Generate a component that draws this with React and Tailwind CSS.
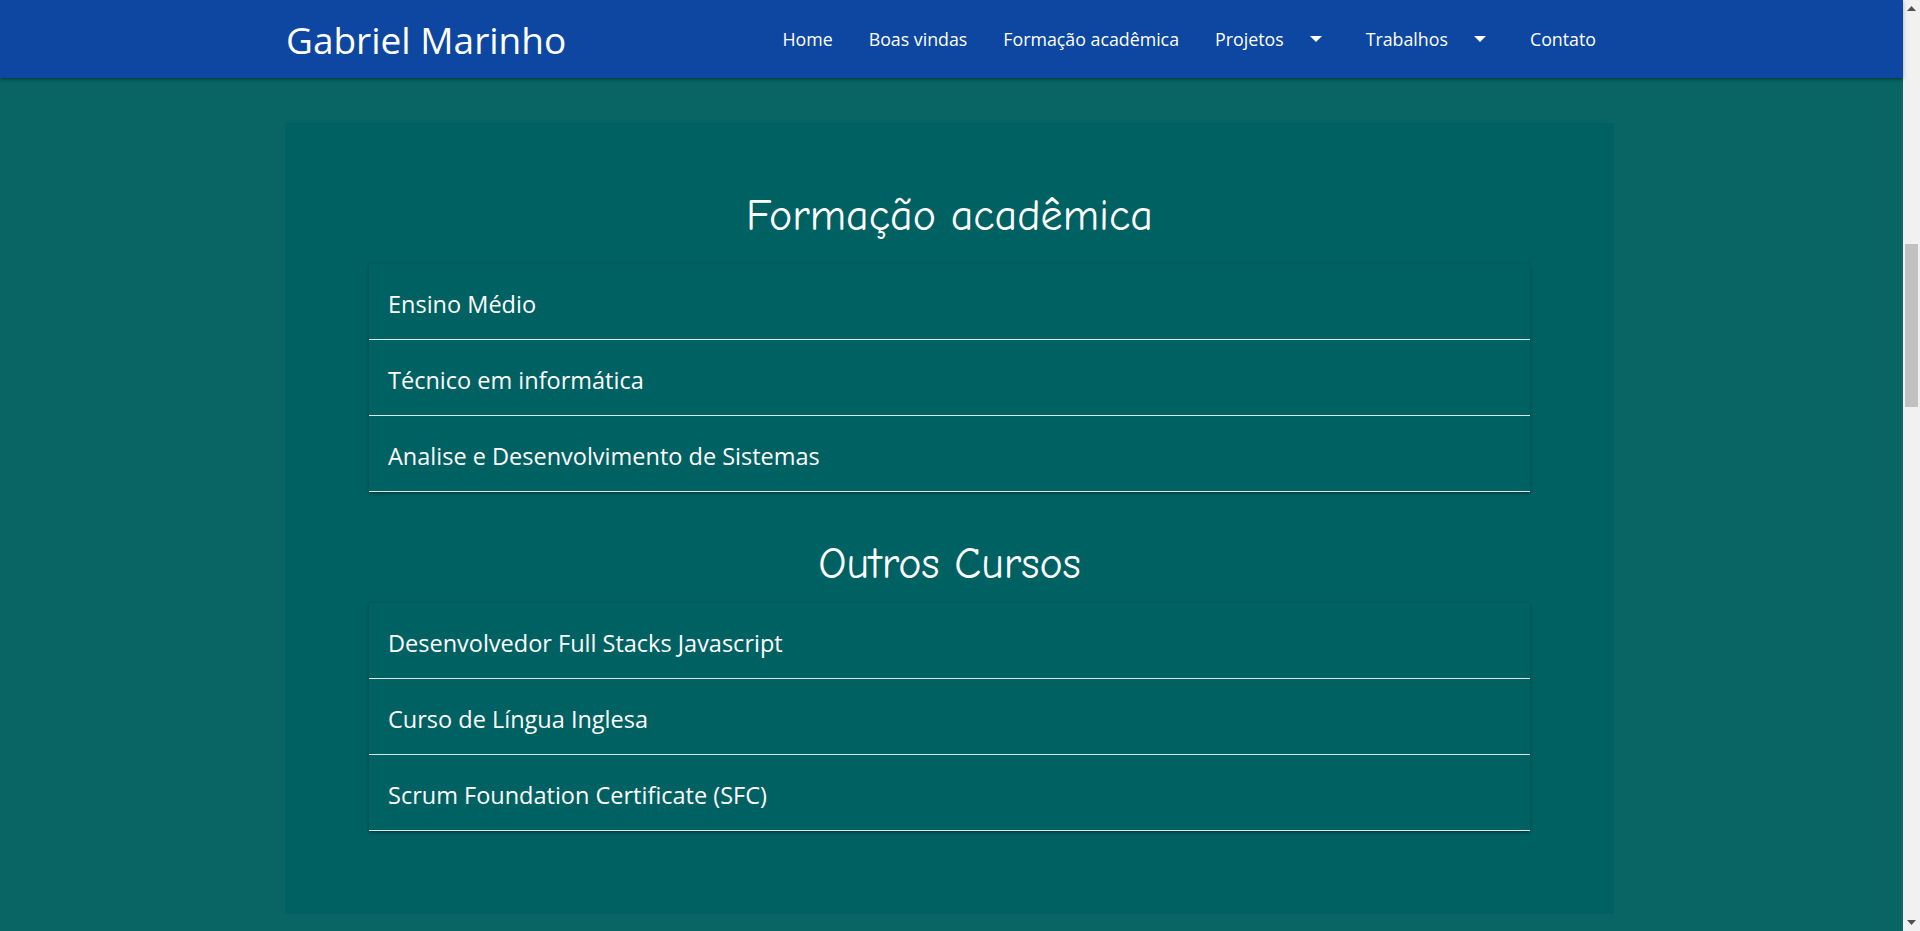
import React from 'react';

const navLinks = [
  { label: 'Home' },
  { label: 'Boas vindas' },
  { label: 'Formação acadêmica' },
  { label: 'Projetos', dropdown: true },
  { label: 'Trabalhos', dropdown: true },
  { label: 'Contato' },
];

const formacao = [
  'Ensino Médio',
  'Técnico em informática',
  'Analise e Desenvolvimento de Sistemas',
];

const cursos = [
  'Desenvolvedor Full Stacks Javascript',
  'Curso de Língua Inglesa',
  'Scrum Foundation Certificate (SFC)',
];

const DropArrow = () => (
  <svg width="12" height="6" viewBox="0 0 12 6" className="ml-[26px] mr-[44px]">
    <polygon points="0,0 12,0 6,6" fill="#ffffff" />
  </svg>
);

const Collection = ({ items }) => (
  <ul className="mx-[84px] shadow-[0_2px_2px_0_rgba(0,0,0,0.14),0_3px_1px_-2px_rgba(0,0,0,0.12),0_1px_5px_0_rgba(0,0,0,0.2)]">
    {items.map((item) => (
      <li
        key={item}
        className="h-[76px] flex items-center pl-[19px] pt-[6px] border-b border-[#dfe6e6] text-[23.5px] text-white"
      >
        {item}
      </li>
    ))}
  </ul>
);

const App = () => {
  return (
    <div className="h-screen flex overflow-hidden font-['Open_Sans',sans-serif]">
      <div className="flex-1 flex flex-col bg-[#086563]">
        {/* Navbar */}
        <nav className="relative z-10 h-[78px] shrink-0 bg-[#0d47a1] shadow-[0_2px_2px_0_rgba(0,0,0,0.14),0_3px_1px_-2px_rgba(0,0,0,0.12),0_1px_5px_0_rgba(0,0,0,0.2)]">
          <div className="ml-[285px] w-[1329px] h-full flex items-center justify-between">
            <a className="text-white text-[37px] leading-none pl-px">Gabriel Marinho</a>
            <ul className="flex items-center pr-[18px]">
              {navLinks.map((link, i) => (
                <li
                  key={link.label}
                  className={`flex items-center text-white text-[17.8px] ${
                    i === navLinks.length - 1 || link.dropdown ? '' : 'mr-[36px]'
                  }`}
                >
                  {link.label}
                  {link.dropdown && <DropArrow />}
                </li>
              ))}
            </ul>
          </div>
        </nav>

        {/* Conteúdo */}
        <div className="pt-[45px]">
          <section className="ml-[285px] w-[1329px] bg-[#006163] pt-[65px] pb-[83px]">
            <h3 className="h-[56px] leading-[56px] text-center text-white text-[44px] font-['Comic_Sans_MS','Comic_Neue','Open_Sans',sans-serif]">
              Formação acadêmica
            </h3>
            <div className="mt-[20px]">
              <Collection items={formacao} />
            </div>
            <h3 className="mt-[44px] h-[56px] leading-[56px] text-center text-white text-[44px] font-['Comic_Sans_MS','Comic_Neue','Open_Sans',sans-serif]">
              Outros Cursos
            </h3>
            <div className="mt-[11px]">
              <Collection items={cursos} />
            </div>
          </section>
        </div>
      </div>

      {/* Barra de rolagem */}
      <div className="w-[17px] shrink-0 bg-[#f1f1f1] flex flex-col">
        <div className="h-[17px] flex items-center justify-center">
          <svg width="9" height="5" viewBox="0 0 9 5">
            <polygon points="0,5 9,5 4.5,0" fill="#505050" />
          </svg>
        </div>
        <div className="flex-1 px-[2px]">
          <div className="mt-[227px] h-[163px] bg-[#c1c1c1]" />
        </div>
        <div className="h-[17px] flex items-center justify-center">
          <svg width="9" height="5" viewBox="0 0 9 5">
            <polygon points="0,0 9,0 4.5,5" fill="#505050" />
          </svg>
        </div>
      </div>
    </div>
  );
};

export default App;
